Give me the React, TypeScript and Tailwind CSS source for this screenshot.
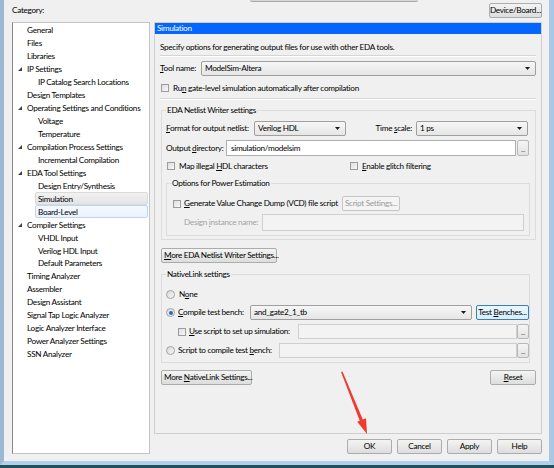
import React from "react";

type TreeItem = { label: string; level: 0 | 1; parent?: boolean; state?: "selected" | "hover" };

const tree: TreeItem[] = [
  { label: "General", level: 0 },
  { label: "Files", level: 0 },
  { label: "Libraries", level: 0 },
  { label: "IP Settings", level: 0, parent: true },
  { label: "IP Catalog Search Locations", level: 1 },
  { label: "Design Templates", level: 0 },
  { label: "Operating Settings and Conditions", level: 0, parent: true },
  { label: "Voltage", level: 1 },
  { label: "Temperature", level: 1 },
  { label: "Compilation Process Settings", level: 0, parent: true },
  { label: "Incremental Compilation", level: 1 },
  { label: "EDA Tool Settings", level: 0, parent: true },
  { label: "Design Entry/Synthesis", level: 1 },
  { label: "Simulation", level: 1, state: "selected" },
  { label: "Board-Level", level: 1, state: "hover" },
  { label: "Compiler Settings", level: 0, parent: true },
  { label: "VHDL Input", level: 1 },
  { label: "Verilog HDL Input", level: 1 },
  { label: "Default Parameters", level: 1 },
  { label: "Timing Analyzer", level: 0 },
  { label: "Assembler", level: 0 },
  { label: "Design Assistant", level: 0 },
  { label: "Signal Tap Logic Analyzer", level: 0 },
  { label: "Logic Analyzer Interface", level: 0 },
  { label: "Power Analyzer Settings", level: 0 },
  { label: "SSN Analyzer", level: 0 },
];

function U({ children }: { children: React.ReactNode }) {
  return <span className="underline underline-offset-[1px]">{children}</span>;
}

function Button({
  children,
  className = "",
  focused = false,
  disabled = false,
}: {
  children: React.ReactNode;
  className?: string;
  focused?: boolean;
  disabled?: boolean;
}) {
  return (
    <div
      className={`flex h-[15px] shrink-0 items-center justify-center rounded-[2px] border leading-none ${
        focused
          ? "border-[#3c7fb1] bg-gradient-to-b from-[#eaf6fd] to-[#d7eefb]"
          : disabled
            ? "border-[#c5c5c5] bg-[#f4f4f4] text-[#9a9a9a]"
            : "border-[#acacac] bg-gradient-to-b from-[#f4f4f4] to-[#dddddd]"
      } ${className}`}
    >
      {children}
    </div>
  );
}

function Combo({ value, className = "" }: { value: string; className?: string }) {
  return (
    <div
      className={`flex h-[15px] shrink-0 items-center justify-between rounded-[2px] border border-[#9f9f9f] bg-gradient-to-b from-[#f6f6f6] to-[#e6e6e6] pr-[5px] pl-[3px] leading-none ${className}`}
    >
      <span>{value}</span>
      <svg width="5" height="3" viewBox="0 0 5 3">
        <polygon points="0,0 5,0 2.5,3" fill="#1a1a1a" />
      </svg>
    </div>
  );
}

function Input({ value = "", className = "", disabled = false }: { value?: string; className?: string; disabled?: boolean }) {
  return (
    <div
      className={`flex h-[15px] shrink-0 items-center border pl-[4px] leading-none ${
        disabled ? "border-[#cfcfcf] bg-[#f3f3f3]" : "border-[#abadb3] bg-white"
      } ${className}`}
    >
      {value}
    </div>
  );
}

function Dots({ className = "" }: { className?: string }) {
  return (
    <div
      className={`flex h-[15px] w-[12px] shrink-0 items-end justify-center rounded-[2px] border border-[#b8b8b8] bg-gradient-to-b from-[#f6f6f6] to-[#e2e2e2] pb-[2px] text-[7px] leading-none text-[#555] ${className}`}
    >
      ...
    </div>
  );
}

function Check({ className = "" }: { className?: string }) {
  return (
    <div
      className={`h-[8px] w-[8px] shrink-0 border border-[#9c9c9c] bg-gradient-to-br from-[#dedede] to-[#f8f8f8] ${className}`}
    />
  );
}

function Radio({ checked = false }: { checked?: boolean }) {
  return (
    <div className="flex h-[9px] w-[9px] shrink-0 items-center justify-center rounded-full border border-[#a2a2a2] bg-gradient-to-br from-[#d9d9d9] to-[#f8f8f8]">
      {checked && <div className="h-[4px] w-[4px] rounded-full bg-[#2a6bb8]" />}
    </div>
  );
}

export default function App() {
  return (
    <div className="relative flex h-[468px] w-[554px] flex-col overflow-hidden whitespace-nowrap bg-[#214f5d] font-['Lato','Noto_Sans',sans-serif] text-[8.2px] tracking-[-0.3px] text-black">
      <div className="flex h-[465px] border-r-[5px] border-b-[4px] border-l-[4px] border-r-[#a9c8e7] border-b-[#b2cfeb] border-l-[#9db8d2] bg-[#f0f0f0]">
        {/* left column */}
        <div className="ml-[8px] flex w-[138px] flex-col">
          <div className="h-[22px] pt-[4px] leading-[12px]">Category:</div>
          <div className="h-[432px] border border-[#c4c4c4] border-l-[#8a8a8a] bg-white pt-[1px]">
            {tree.map((t) => (
              <div key={t.label} className="flex h-[12.96px] items-center">
                <div className="flex w-[11px] shrink-0 justify-end pr-[2px]">
                  {t.parent && (
                    <svg width="4" height="4" viewBox="0 0 4 4">
                      <polygon points="4,0 4,4 0,4" fill="#404040" />
                    </svg>
                  )}
                </div>
                <div
                  className={`flex h-full flex-1 items-center ${t.level === 1 ? "ml-[11px]" : ""} ${
                    t.state === "selected"
                      ? "mr-[1px] rounded-[2px] border border-[#dadada] bg-gradient-to-b from-[#f2f2f2] to-[#e4e4e4] pl-[2px]"
                      : t.state === "hover"
                        ? "mr-[1px] rounded-[2px] border border-[#b9d7f4] bg-gradient-to-b from-[#f5f9fe] to-[#e9f2fc] pl-[2px]"
                        : "pl-[3px]"
                  }`}
                >
                  {t.label}
                </div>
              </div>
            ))}
          </div>
        </div>

        {/* right column */}
        <div className="ml-[4px] flex w-[388px] flex-col">
          <div className="flex h-[22px] justify-end pt-[3px]">
            <Button className="h-[14px] w-[53px]">Device/Board...</Button>
          </div>

          <div className="flex h-[412px] flex-col border border-[#cfcfcf]">
            <div className="h-[11px] bg-[#0466fd] pl-[2px] leading-[11px] text-white">Simulation</div>

            <div className="flex flex-col px-[5px]">
              <div className="mt-[7px] h-[12px] leading-[12px]">
                Specify options for generating output files for use with other EDA tools.
              </div>
              <div className="mt-[2px] h-[2px] border-t border-b border-t-[#d5d5d5] border-b-white" />

              <div className="mt-[4px] flex items-center">
                <span className="w-[41px] shrink-0">
                  <U>T</U>ool name:
                </span>
                <Combo value="ModelSim-Altera" className="flex-1" />
              </div>

              <div className="mt-[6px] flex h-[12px] items-center gap-[4px] pl-[1px]">
                <Check />
                <span>
                  Ru<U>n</U> gate-level simulation automatically after compilation
                </span>
              </div>
              <div className="mt-[4px] h-[2px] border-t border-b border-t-[#d5d5d5] border-b-white" />

              {/* EDA Netlist Writer settings */}
              <div className="relative mt-[10px] ml-[1px] h-[130px] border border-[#dcdcdc] pr-[7px] pl-[4px]">
                <span className="absolute -top-[7px] left-[4px] bg-[#f0f0f0] px-[1px] leading-[12px]">
                  EDA Netlist Writer settings
                </span>

                <div className="mt-[10px] flex items-center">
                  <span className="w-[88px] shrink-0">
                    <U>F</U>ormat for output netlist:
                  </span>
                  <Combo value="Verilog HDL" className="w-[92px]" />
                  <span className="flex-1 pr-[4px] text-right">
                    Time <U>s</U>cale:
                  </span>
                  <Combo value="1 ps" className="w-[112px]" />
                </div>

                <div className="mt-[4px] flex items-center">
                  <span className="w-[60px] shrink-0">
                    Output <U>d</U>irectory:
                  </span>
                  <Input value="simulation/modelsim" className="h-[16px] w-[290px]" />
                  <Dots className="ml-[1px] h-[16px]" />
                </div>

                <div className="mt-[4px] flex h-[13px] items-center">
                  <div className="flex w-[184px] items-center gap-[4px] pl-[1px]">
                    <Check />
                    <span>
                      Map illegal <U>H</U>DL characters
                    </span>
                  </div>
                  <div className="flex items-center gap-[4px]">
                    <Check />
                    <span>
                      <U>E</U>nable glitch filtering
                    </span>
                  </div>
                </div>

                {/* Options for Power Estimation */}
                <div className="relative mt-[10px] mr-[-2px] h-[53px] border border-[#dcdcdc] pl-[6px]">
                  <span className="absolute -top-[7px] left-[4px] bg-[#f0f0f0] px-[1px] leading-[12px]">
                    Options for Power Estimation
                  </span>
                  <div className="mt-[12px] flex items-center">
                    <Check />
                    <span className="ml-[3px] w-[158px]">
                      <U>G</U>enerate Value Change Dump (VCD) file script
                    </span>
                    <Button disabled className="w-[58px]">
                      Script Settings...
                    </Button>
                  </div>
                  <div className="mt-[3px] flex items-center">
                    <span className="ml-[11px] w-[78px] text-[#a3a3a3]">
                      Design <U>i</U>nstance name:
                    </span>
                    <Input disabled className="h-[17px] w-[262px]" />
                  </div>
                </div>
              </div>

              <Button className="mt-[8px] ml-[1px] w-[116px] justify-start pl-[2px]">
                <span>
                  <U>M</U>ore EDA Netlist Writer Settings...
                </span>
              </Button>

              {/* NativeLink settings */}
              <div className="relative mt-[11px] mr-[6px] ml-[1px] h-[89px] border border-[#dcdcdc] pl-[4px]">
                <span className="absolute -top-[7px] left-[4px] bg-[#f0f0f0] px-[1px] leading-[12px]">
                  NativeLink settings
                </span>
                <div className="mt-[12px] flex h-[15px] items-center gap-[4px]">
                  <Radio />
                  <span>
                    N<U>o</U>ne
                  </span>
                </div>
                <div className="mt-[3px] flex h-[15px] items-center">
                  <Radio checked />
                  <span className="ml-[3px] w-[72px]">
                    <U>C</U>ompile test bench:
                  </span>
                  <Combo value="and_gate2_1_tb" className="w-[222px]" />
                  <Button focused className="ml-[4px] w-[53px]">
                    <span>
                      Test <U>B</U>enches...
                    </span>
                  </Button>
                </div>
                <div className="mt-[4px] flex h-[15px] items-center">
                  <Check className="ml-[12px]" />
                  <span className="ml-[3px] w-[109px]">
                    <U>U</U>se script to set up simulation:
                  </span>
                  <Input disabled className="w-[219px]" />
                  <Dots />
                </div>
                <div className="mt-[4px] flex h-[15px] items-center">
                  <Radio />
                  <span className="ml-[3px] w-[101px]">
                    Script to compile test <U>b</U>ench:
                  </span>
                  <Input disabled className="w-[238px]" />
                  <Dots />
                </div>
              </div>

              <div className="mt-[7px] flex items-center justify-between">
                <Button className="ml-[1px] w-[91px] justify-start pl-[2px]">
                  <span>
                    More <U>N</U>ativeLink Settings...
                  </span>
                </Button>
                <Button className="w-[46px]">
                  <U>R</U>eset
                </Button>
              </div>
            </div>
          </div>

          <div className="mt-[5px] flex justify-end gap-[5px]">
            <Button className="w-[45px]">OK</Button>
            <Button className="w-[45px]">Cancel</Button>
            <Button className="w-[45px]">Apply</Button>
            <Button className="w-[45px]">Help</Button>
          </div>
        </div>
      </div>

      {/* popup edge at the top */}
      <div className="absolute top-0 left-[250px] h-[2px] w-[168px] rounded-b-[2px] border-b border-[#a8a8a8] bg-[#d6d6d6]" />

      {/* red annotation arrow */}
      <svg className="pointer-events-none absolute top-0 left-0" width="554" height="468" viewBox="0 0 554 468">
        <polygon points="341,372 342.5,371.6 363,420 360,421.5" fill="#f2392f" />
        <polygon points="357.2,421.8 366,418.2 367,434" fill="#f2392f" />
      </svg>
    </div>
  );
}
